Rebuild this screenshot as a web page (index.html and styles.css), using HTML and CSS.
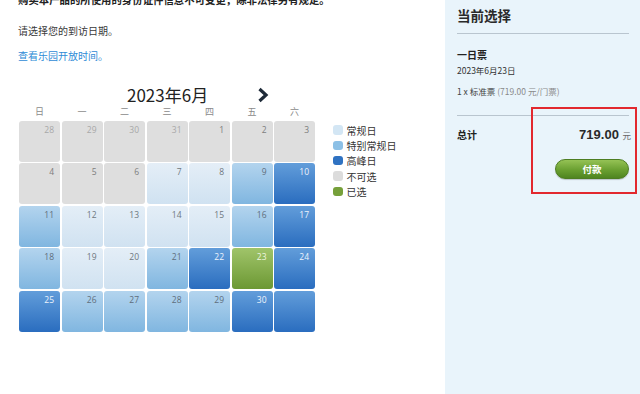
FILE: index.html
```html
<!DOCTYPE html>
<html lang="zh">
<head>
<meta charset="utf-8">
<link rel="stylesheet" href="styles.css">
</head>
<body>
<div class="page">
  <div class="main">
    <p class="note">购买本产品的所使用的身份证件信息不可变更，除非法律另有规定。</p>
    <p class="prompt">请选择您的到访日期。</p>
    <p class="link">查看乐园开放时间。</p>
    <div class="cal">
      <div class="cal-head">
        <span class="month">2023年6月</span>
        <svg class="next" width="12" height="16" viewBox="0 0 12 16"><path d="M2.5 2 L9 8 L2.5 14" fill="none" stroke="#1e2a38" stroke-width="3.2" stroke-linejoin="miter"/></svg>
      </div>
      <div class="weekdays">
        <span>日</span><span>一</span><span>二</span><span>三</span><span>四</span><span>五</span><span>六</span>
      </div>
      <div class="cal-body">
        <div class="grid">
          <div class="day off prev">28</div><div class="day off prev">29</div><div class="day off prev">30</div><div class="day off prev">31</div><div class="day off">1</div><div class="day off">2</div><div class="day off">3</div>
          <div class="day off">4</div><div class="day off">5</div><div class="day off">6</div><div class="day reg">7</div><div class="day reg">8</div><div class="day spec">9</div><div class="day peak">10</div>
          <div class="day spec">11</div><div class="day reg">12</div><div class="day reg">13</div><div class="day reg">14</div><div class="day reg">15</div><div class="day spec">16</div><div class="day peak">17</div>
          <div class="day spec">18</div><div class="day reg">19</div><div class="day reg">20</div><div class="day spec">21</div><div class="day peak">22</div><div class="day sel">23</div><div class="day peak">24</div>
          <div class="day peak">25</div><div class="day spec">26</div><div class="day spec">27</div><div class="day spec">28</div><div class="day spec">29</div><div class="day peak">30</div><div class="day peak"></div>
        </div>
        <ul class="legend">
          <li><i class="sw sw-reg"></i>常规日</li>
          <li><i class="sw sw-spec"></i>特别常规日</li>
          <li><i class="sw sw-peak"></i>高峰日</li>
          <li><i class="sw sw-off"></i>不可选</li>
          <li><i class="sw sw-sel"></i>已选</li>
        </ul>
      </div>
    </div>
  </div>
  <aside class="side">
    <h2 class="side-title">当前选择</h2>
    <div class="ticket">
      <div class="t-name">一日票</div>
      <div class="t-date">2023年6月23日</div>
      <div class="t-line">1 x 标准票 <span class="muted">(719.00 元/门票)</span></div>
    </div>
    <div class="total">
      <span class="t-label">总计</span>
      <span class="t-amount">719.00 <small>元</small></span>
    </div>
    <div class="pay-row"><button class="pay">付款</button></div>
    <div class="highlight"></div>
  </aside>
</div>
</body>
</html>
```

FILE: styles.css
```css
* { box-sizing: border-box; }
html, body { margin: 0; padding: 0; }
body {
  width: 640px;
  height: 394px;
  overflow: hidden;
  background: #fff;
  font-family: "Noto Sans CJK SC", "Noto Sans", sans-serif;
  color: #333;
}
.page {
  display: flex;
  height: 394px;
}
.main {
  width: 445px;
  padding-left: 18px;
  margin-top: -7px;
}
.main p { margin: 0; line-height: 14px; font-size: 10px; }
.note { font-weight: bold; color: #222; font-size: 10.4px !important; white-space: nowrap; }
.prompt { margin-top: 17px !important; color: #3a3a3a; }
.link { margin-top: 11px !important; color: #2f8bd6; }

.cal { margin-top: 22px; margin-left: 1px; }
.cal-head {
  display: flex;
  align-items: center;
  height: 19px;
  padding-left: 108px;
  overflow: visible;
}
.month {
  font-family: "Noto Sans CJK SC", "Noto Sans", sans-serif;
  font-size: 17px;
  color: #222;
  line-height: 19px;
  height: 19px;
}
.next { margin-left: 49px; }
.weekdays {
  display: grid;
  grid-template-columns: repeat(7, 41px);
  column-gap: 1.5px;
  height: 14px;
  line-height: 14px;
  margin-top: 1px;
}
.weekdays span {
  text-align: center;
  font-size: 9px;
  color: #8a8a8a;
}
.cal-body {
  display: flex;
  margin-top: 1.5px;
}
.grid {
  display: grid;
  grid-template-columns: repeat(7, 41px);
  grid-auto-rows: 41px;
  gap: 1.5px;
}
.day {
  border-radius: 3px;
  text-align: right;
  padding: 4px 6px 0 0;
  font-family: "Open Sans", "Liberation Sans", sans-serif;
  font-size: 8.5px;
  line-height: 10px;
}
.off { background: #dedede; color: #7d7d7d; }
.off.prev { color: #a8a8a8; }
.reg { background: linear-gradient(#e4eef7, #d0e2f1); color: #6f7880; }
.spec { background: linear-gradient(#b3d4ee, #80b6e0); color: #5f6e7c; }
.peak { background: linear-gradient(#629dda, #2a6dbf); color: #eef4fc; }
.sel { background: linear-gradient(#a0c46a, #6c9833); color: #eef6e0; }

.legend {
  list-style: none;
  margin: 0 0 0 18px;
  padding: 2px 0 0 0;
  font-size: 10px;
  color: #333;
}
.legend li {
  display: flex;
  align-items: center;
  height: 15.3px;
}
.sw {
  display: inline-block;
  width: 9.5px;
  height: 9.5px;
  border-radius: 3px;
  margin-right: 4px;
}
.sw-reg { background: #d3e6f4; }
.sw-spec { background: #8cc0e6; }
.sw-peak { background: #2f72c2; }
.sw-off { background: #dcdcdc; }
.sw-sel { background: #76a03a; }

.side {
  position: relative;
  width: 195px;
  height: 394px;
  background: #e9f4fb;
  padding: 0 11px 0 12px;
}
.side-title {
  margin: 0;
  padding-top: 5px;
  font-size: 13.5px;
  line-height: 20px;
  font-weight: bold;
  color: #2a2a2a;
  padding-bottom: 8px;
  border-bottom: 1px solid #b9c5cf;
}
.ticket {
  padding-top: 14px;
  padding-bottom: 17px;
  border-bottom: 1px solid #b9c5cf;
}
.t-name { font-size: 10px; font-weight: bold; line-height: 14px; color: #222; }
.t-date { font-size: 8.5px; line-height: 14px; color: #333; margin-top: 1px; }
.t-line { font-size: 8.5px; line-height: 14px; color: #444; margin-top: 7px; }
.muted { color: #8a8a8a; }
.total {
  display: flex;
  justify-content: space-between;
  align-items: baseline;
  margin-top: 10px;
  line-height: 18px;
}
.t-label { font-size: 10px; font-weight: bold; color: #222; }
.t-amount {
  font-family: "Liberation Sans", "Noto Sans", sans-serif;
  font-size: 13px;
  font-weight: bold;
  color: #2a2a2a;
  margin-right: -2px;
}
.t-amount small {
  font-family: "Noto Sans CJK SC", sans-serif;
  font-size: 8.5px;
  font-weight: normal;
  color: #666;
}
.pay-row {
  display: flex;
  justify-content: flex-end;
  margin-top: 15px;
}
.pay {
  width: 74px;
  height: 20px;
  border-radius: 10px;
  border: 1px solid #4d7d22;
  background: linear-gradient(#95c255, #6aa031 55%, #4f8520);
  color: #fff;
  font-family: "Noto Sans CJK SC", sans-serif;
  font-weight: bold;
  font-size: 9.5px;
  line-height: 18px;
  padding: 0;
  box-shadow: 0 1px 1px rgba(0,0,0,0.2);
}
.highlight {
  position: absolute;
  left: 86px;
  top: 107px;
  width: 106px;
  height: 87px;
  border: 2px solid #e2282e;
}
```
